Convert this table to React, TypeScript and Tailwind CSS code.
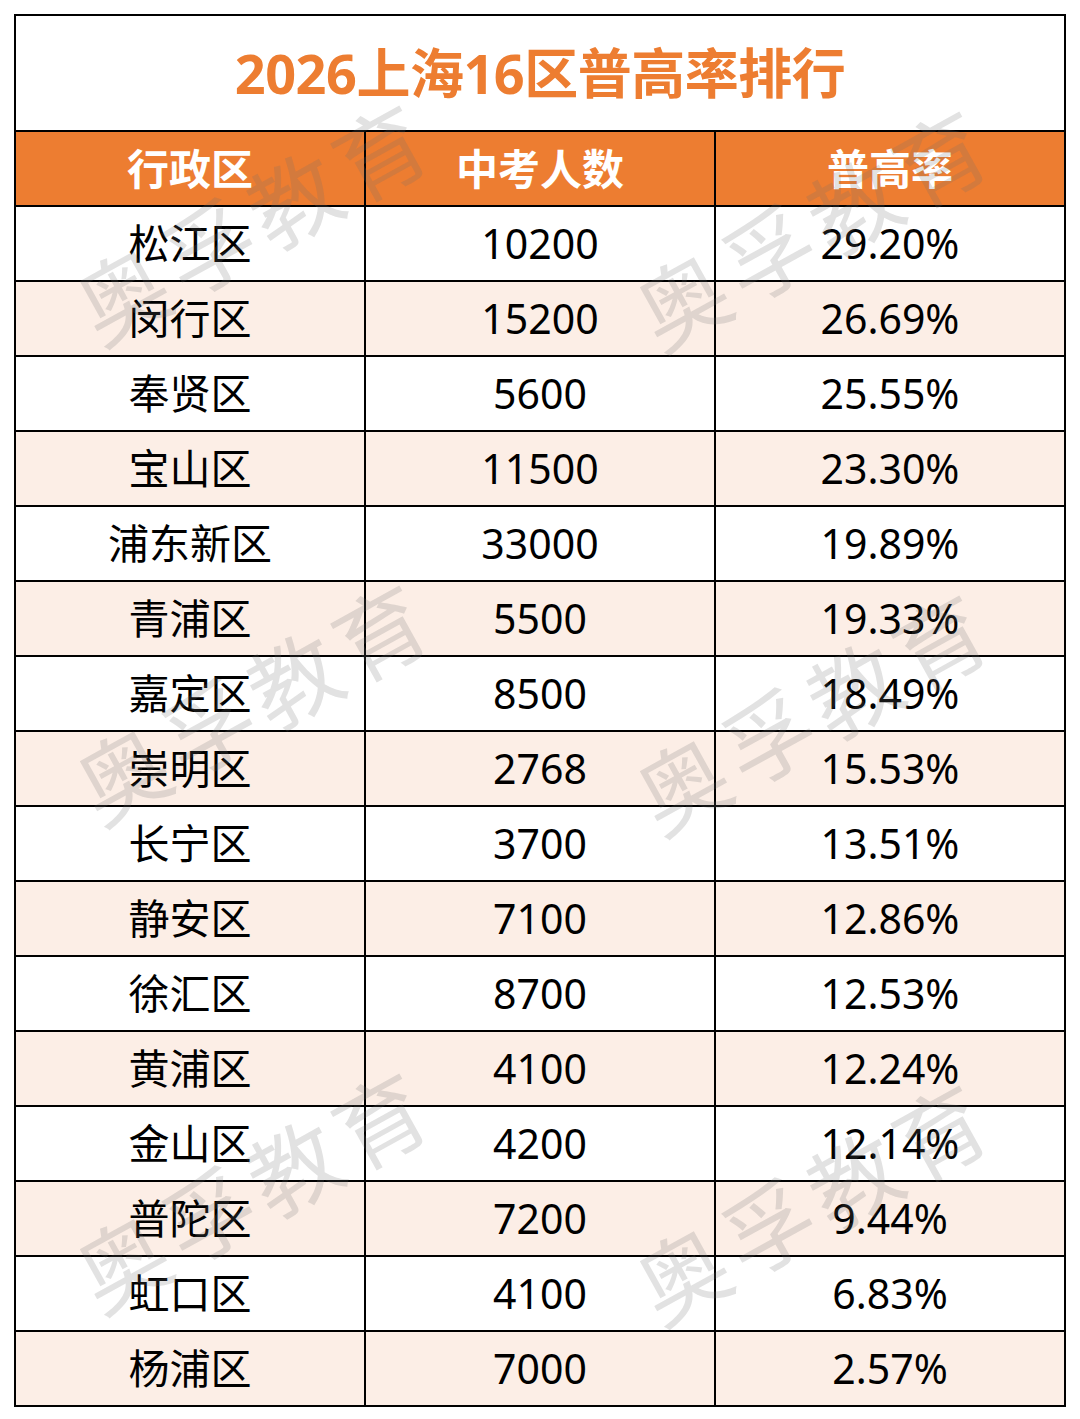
import React from "react";

const rows: [string, string, string][] = [
  ["松江区", "10200", "29.20%"],
  ["闵行区", "15200", "26.69%"],
  ["奉贤区", "5600", "25.55%"],
  ["宝山区", "11500", "23.30%"],
  ["浦东新区", "33000", "19.89%"],
  ["青浦区", "5500", "19.33%"],
  ["嘉定区", "8500", "18.49%"],
  ["崇明区", "2768", "15.53%"],
  ["长宁区", "3700", "13.51%"],
  ["静安区", "7100", "12.86%"],
  ["徐汇区", "8700", "12.53%"],
  ["黄浦区", "4100", "12.24%"],
  ["金山区", "4200", "12.14%"],
  ["普陀区", "7200", "9.44%"],
  ["虹口区", "4100", "6.83%"],
  ["杨浦区", "7000", "2.57%"],
];

const marks: [number, number][] = [
  [255, 222],
  [815, 228],
  [255, 702],
  [815, 712],
  [255, 1190],
  [815, 1202],
];

export default function App() {
  return (
    <div
      className="relative w-[1080px] h-[1419px] bg-white overflow-hidden"
      style={{ fontFamily: '"Noto Sans", "Noto Sans CJK SC", sans-serif' }}
    >
      <div className="ml-[14px] pt-[14px]">
        <div className="w-[1052px] border-2 border-black">
          <div className="h-[114px] flex items-center justify-center text-[54px] font-bold text-[#ED7D31] tracking-[-0.5px]">
            2026上海16区普高率排行
          </div>
          <div className="grid grid-cols-[348px_350px_350px] h-[75px] border-t-2 border-black bg-[#ED7D31] text-white font-bold text-[42px]">
            <div className="flex items-center justify-center">行政区</div>
            <div className="flex items-center justify-center border-l-2 border-black">中考人数</div>
            <div className="flex items-center justify-center border-l-2 border-black">普高率</div>
          </div>
          {rows.map((r, i) => (
            <div
              key={i}
              className={
                "grid grid-cols-[348px_350px_350px] h-[75px] border-t-2 border-black text-[41px] text-black " +
                (i % 2 === 1 ? "bg-[#FCEEE6]" : "bg-white")
              }
            >
              <div className="flex items-center justify-center">{r[0]}</div>
              <div className="flex items-center justify-center border-l-2 border-black">{r[1]}</div>
              <div className="flex items-center justify-center border-l-2 border-black">{r[2]}</div>
            </div>
          ))}
        </div>
      </div>
      {marks.map(([x, y], i) => (
        <div
          key={i}
          className="absolute -translate-x-1/2 -translate-y-1/2 -rotate-[29deg] whitespace-nowrap text-[90px] font-normal tracking-[8px] text-[rgba(110,110,110,0.2)] pointer-events-none"
          style={{ left: x, top: y }}
        >
          奥孚教育
        </div>
      ))}
    </div>
  );
}
